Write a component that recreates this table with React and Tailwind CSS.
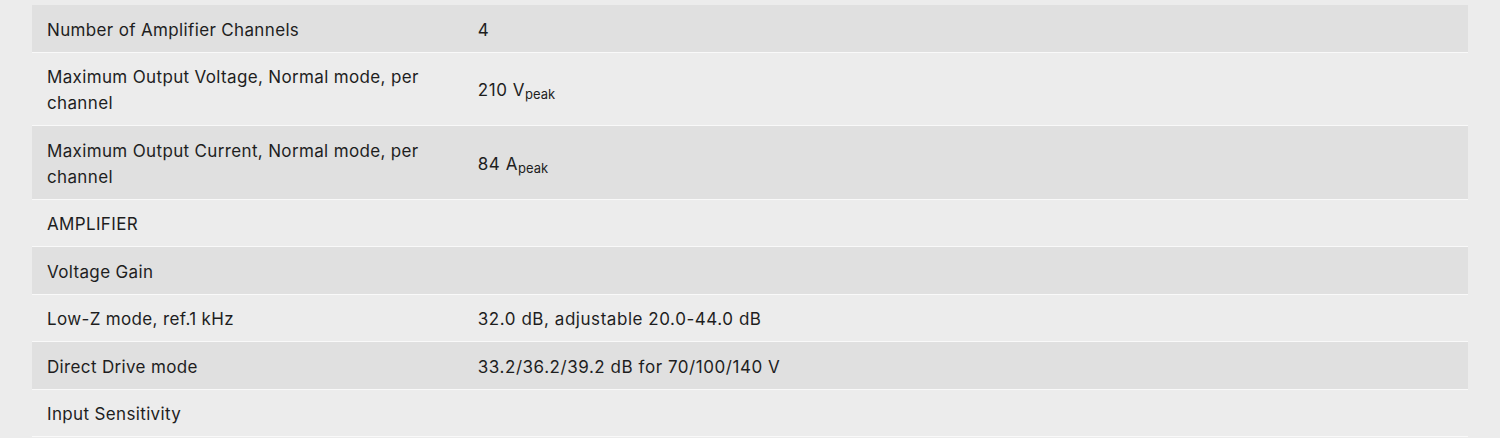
import React from 'react';

const rows = [
  { label: 'Number of Amplifier Channels', value: '4' },
  { label: 'Maximum Output Voltage, Normal mode, per channel', value: '210 V', sub: 'peak' },
  { label: 'Maximum Output Current, Normal mode, per channel', value: '84 A', sub: 'peak' },
  { label: 'AMPLIFIER', value: '' },
  { label: 'Voltage Gain', value: '' },
  { label: 'Low-Z mode, ref.1 kHz', value: '32.0 dB, adjustable 20.0-44.0 dB' },
  { label: 'Direct Drive mode', value: '33.2/36.2/39.2 dB for 70/100/140 V' },
  { label: 'Input Sensitivity', value: '' },
];

export default function App() {
  return (
    <div
      className="min-h-screen bg-[#ececec] px-8 pt-[5px] text-[17px] tracking-[0.35px] text-[#1e1e1e]"
      style={{ fontFamily: 'Inter, "Noto Sans", sans-serif' }}
    >
      <div className="flex flex-col">
        {rows.map((row, i) => (
          <div
            key={i}
            className={`flex items-center border-b border-[#f9f9f9] leading-[26px] ${
              i % 2 === 0 ? 'bg-[#e0e0e0]' : 'bg-[#ececec]'
            }`}
          >
            <div className="w-[30%] shrink-0 pl-[15px] pr-[20px] pt-[11.5px] pb-[9px]">{row.label}</div>
            <div className="flex-1 px-[15px] pt-[11.5px] pb-[9px] tracking-[0.55px]">
              {row.value}
              {row.sub && <sub className="text-[13px] tracking-normal">{row.sub}</sub>}
            </div>
          </div>
        ))}
      </div>
    </div>
  );
}
